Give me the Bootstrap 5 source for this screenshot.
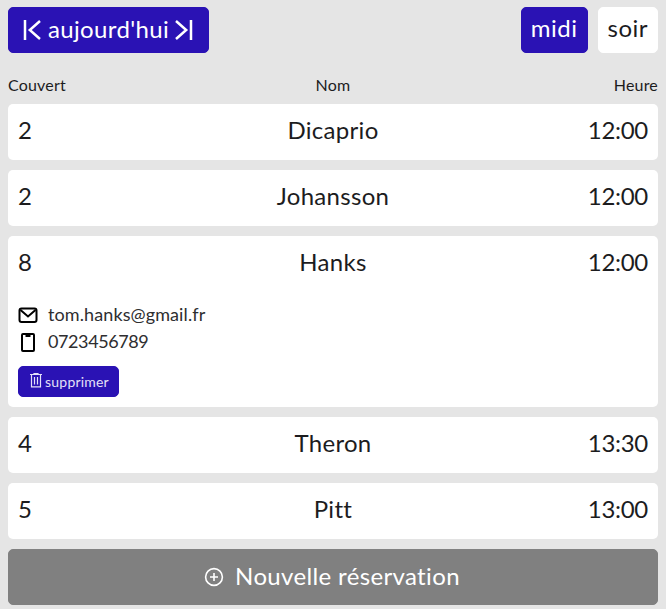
<!DOCTYPE html>
<html lang="fr">
<head>
<meta charset="utf-8">
<meta name="viewport" content="width=device-width, initial-scale=1">
<title>Réservations</title>
<link href="https://cdn.jsdelivr.net/npm/bootstrap@5.3.0/dist/css/bootstrap.min.css" rel="stylesheet">
<style>
body{background:#e5e5e5;font-family:Lato,"Liberation Sans",sans-serif;font-size:16px;color:#1c1c1e}
.page{padding:7px 8px 4px}
.stack{gap:10px}
.toolbar .btn{height:46px;font-size:24px;line-height:40px;padding:0 9px 4px;border-radius:5px;letter-spacing:.5px}
.btn-ink,.btn-ink:hover{background:#2a12b4;border-color:#2a12b4;color:#fff}
.btn-plain,.btn-plain:hover{background:#fff;border-color:#fff;color:#1c1c1e}
.toolbar .btn.day{width:201px;padding:0 15px 0 14px;letter-spacing:.35px}
.day .t-day{padding:0 0 3px 1px}
.heads{height:24px;margin-top:20px;line-height:24px;margin-bottom:7px;letter-spacing:.2px}
.heads > *,.line > *{flex:1 1 0}
.booking{background:#fff;border-radius:5px;padding:0 10px}
.line{height:56px;line-height:52px;font-size:24px;letter-spacing:.3px}
.line .text-end{letter-spacing:-.3px}
.contact{font-size:18px;line-height:27px;padding-top:9px;color:#2e2e30}
.contact svg{width:20px;height:20px}
.t-mail,.t-tel{margin-left:10px}
.t-mail{letter-spacing:.1px}
.t-tel{letter-spacing:-.4px}
.btn.del{height:31px;width:101px;font-size:14px;line-height:29px;padding:0 0 0 1px;border-radius:5px;margin:11px 0 10px;letter-spacing:.2px;gap:2px;color:#e4e0f8}
.btn.del svg{margin-top:-3px}
.btn.new,.btn.new:hover{height:56px;background:#808080;border-color:#808080;color:#fff;font-size:24px;line-height:52px;padding:0 2px 2px 0;border-radius:5px;letter-spacing:.35px;gap:11px}
.btn.new svg{margin-top:2px}
</style>
</head>
<body>
<main class="page d-flex flex-column">
  <div class="toolbar d-flex justify-content-between">
    <button class="btn btn-ink day d-flex align-items-center justify-content-between">
      <svg width="18" height="22" viewBox="0 0 18 22" fill="none" stroke="currentColor" stroke-width="2.500"><path d="M2 1v20M17 2 6.800 11 17 20"/></svg>
      <span class="t-day">aujourd'hui</span>
      <svg width="18" height="22" viewBox="0 0 18 22" fill="none" stroke="currentColor" stroke-width="2.500"><path d="M16 1v20M1 2l10.200 9L1 20"/></svg>
    </button>
    <div class="d-flex stack">
      <button class="btn btn-ink">midi</button>
      <button class="btn btn-plain">soir</button>
    </div>
  </div>
  <div class="heads d-flex"><span>Couvert</span><span class="text-center">Nom</span><span class="text-end">Heure</span></div>
  <div class="d-flex flex-column stack">
    <div class="booking"><div class="line d-flex"><span>2</span><span class="text-center">Dicaprio</span><span class="text-end">12:00</span></div></div>
    <div class="booking"><div class="line d-flex"><span>2</span><span class="text-center">Johansson</span><span class="text-end">12:00</span></div></div>
    <div class="booking">
      <div class="line d-flex"><span>8</span><span class="text-center">Hanks</span><span class="text-end">12:00</span></div>
      <div class="contact">
        <div class="d-flex align-items-center"><svg viewBox="0 0 20 20" fill="none" stroke="#000" stroke-width="2"><rect x="1.500" y="3.500" width="17" height="13.500" rx="2"/><path d="m2.500 5 7.500 6.500L17.500 5"/></svg><span class="t-mail">tom.hanks@gmail.fr</span></div>
        <div class="d-flex align-items-center"><svg viewBox="0 0 20 20" fill="none" stroke="#000" stroke-width="2"><rect x="4" y="2" width="12" height="17" rx="1"/><path d="M7.500 3.500h5" stroke-width="3"/></svg><span class="t-tel">0723456789</span></div>
      </div>
      <button class="btn btn-ink del d-flex align-items-center justify-content-center"><svg width="14" height="15" viewBox="0 0 14 15" fill="none" stroke="currentColor" stroke-width="1.200"><path d="M1 1.500h12M5 1.500V.6h4v.9M2.500 1.500v12.400h9V1.500M5.500 4v7.500M8.500 4v7.500"/></svg><span class="t-del">supprimer</span></button>
    </div>
    <div class="booking"><div class="line d-flex"><span>4</span><span class="text-center">Theron</span><span class="text-end">13:30</span></div></div>
    <div class="booking"><div class="line d-flex"><span>5</span><span class="text-center">Pitt</span><span class="text-end">13:00</span></div></div>
    <button class="btn new d-flex align-items-center justify-content-center"><svg width="20" height="20" viewBox="0 0 20 20" fill="none" stroke="currentColor" stroke-width="1.600"><circle cx="10" cy="10" r="8.400"/><path d="M10 6v8M6 10h8"/></svg><span class="t-new">Nouvelle réservation</span></button>
  </div>
</main>
<script src="https://cdn.jsdelivr.net/npm/bootstrap@5.3.0/dist/js/bootstrap.bundle.min.js"></script>
</body>
</html>
